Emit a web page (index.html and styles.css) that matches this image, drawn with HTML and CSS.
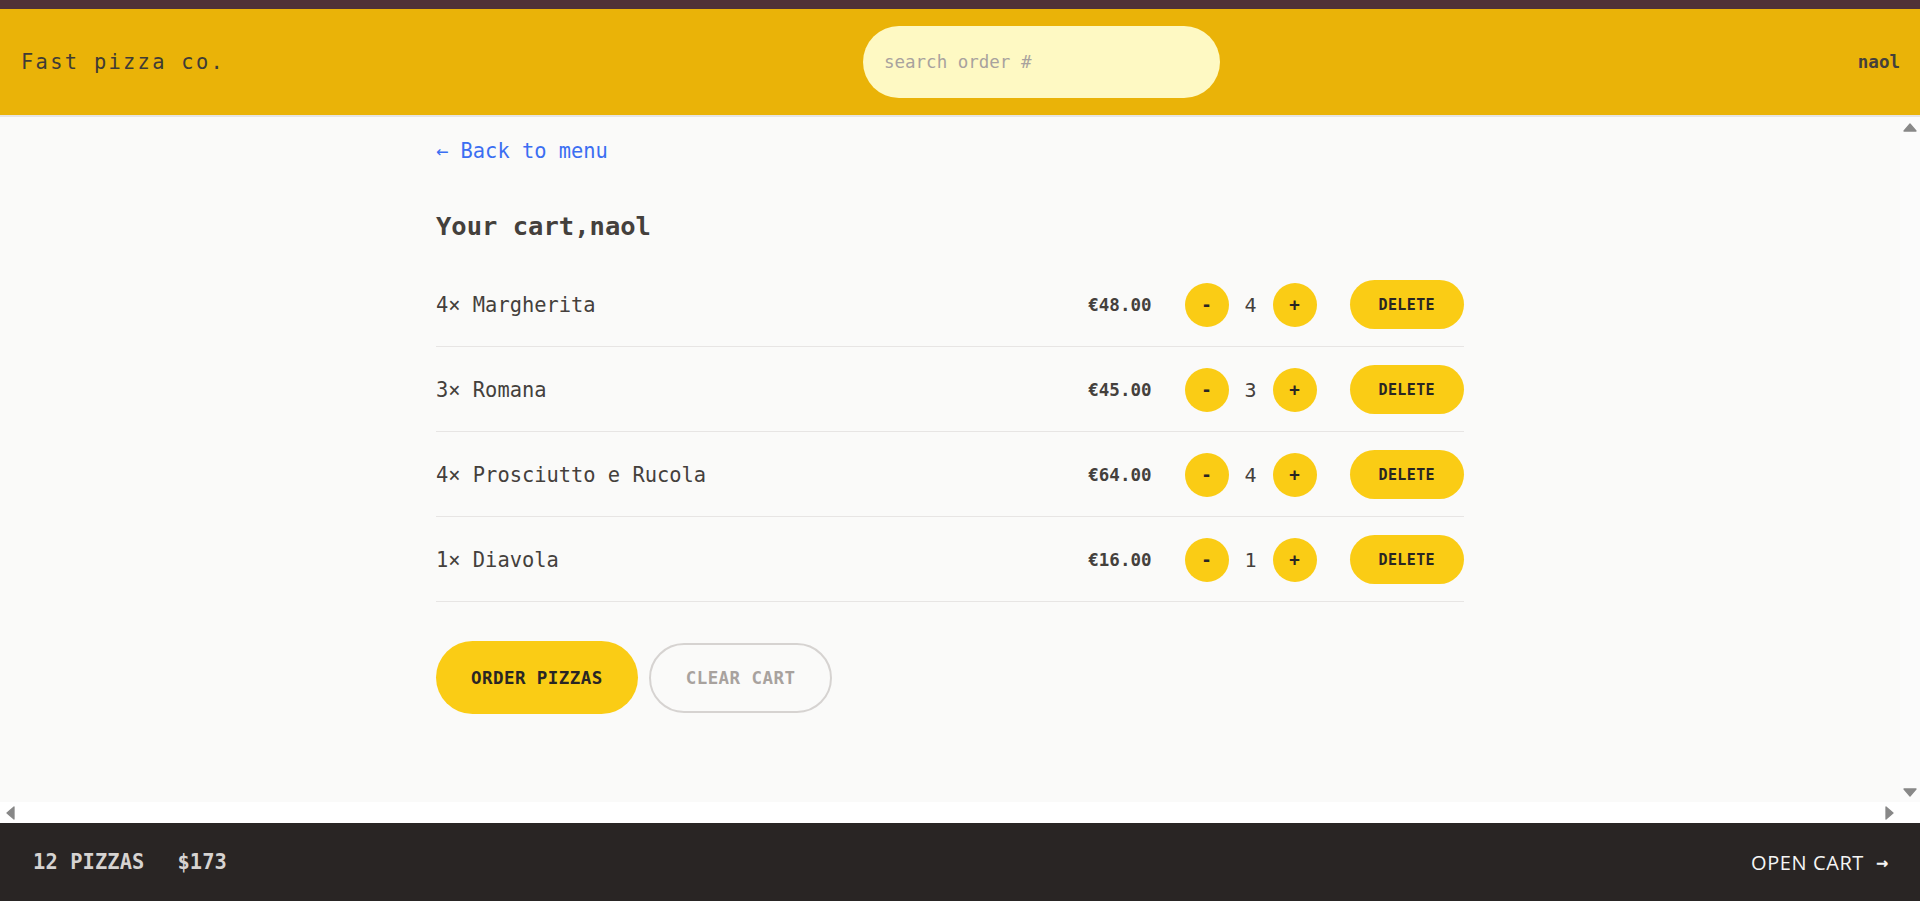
FILE: index.html
```html
<!DOCTYPE html>
<html lang="en">
<head>
<meta charset="utf-8">
<title>Fast pizza co.</title>
<link rel="stylesheet" href="styles.css">
</head>
<body>
<div class="topstrip"></div>
<header class="header">
  <a class="logo" href="#">Fast pizza co.</a>
  <form class="search">
    <input class="search-input" type="text" placeholder="search order #">
  </form>
  <div class="username">naol</div>
</header>
<main class="main">
  <div class="viewport">
    <div class="container">
      <a class="back-link" href="#">&larr; Back to menu</a>
      <h2 class="title">Your cart,naol</h2>
      <ul class="cart-list">
        <li class="cart-item">
          <p class="item-name">4&times; Margherita</p>
          <div class="item-controls">
            <p class="item-price">&euro;48.00</p>
            <div class="qty">
              <button class="btn-round">-</button>
              <span class="qty-num">4</span>
              <button class="btn-round">+</button>
            </div>
            <button class="btn-small">Delete</button>
          </div>
        </li>
        <li class="cart-item">
          <p class="item-name">3&times; Romana</p>
          <div class="item-controls">
            <p class="item-price">&euro;45.00</p>
            <div class="qty">
              <button class="btn-round">-</button>
              <span class="qty-num">3</span>
              <button class="btn-round">+</button>
            </div>
            <button class="btn-small">Delete</button>
          </div>
        </li>
        <li class="cart-item">
          <p class="item-name">4&times; Prosciutto e Rucola</p>
          <div class="item-controls">
            <p class="item-price">&euro;64.00</p>
            <div class="qty">
              <button class="btn-round">-</button>
              <span class="qty-num">4</span>
              <button class="btn-round">+</button>
            </div>
            <button class="btn-small">Delete</button>
          </div>
        </li>
        <li class="cart-item">
          <p class="item-name">1&times; Diavola</p>
          <div class="item-controls">
            <p class="item-price">&euro;16.00</p>
            <div class="qty">
              <button class="btn-round">-</button>
              <span class="qty-num">1</span>
              <button class="btn-round">+</button>
            </div>
            <button class="btn-small">Delete</button>
          </div>
        </li>
      </ul>
      <div class="actions">
        <a class="btn-primary" href="#">Order pizzas</a>
        <button class="btn-secondary">Clear cart</button>
      </div>
    </div>
  </div>
  <div class="vbar">
    <span class="sb-btn"><svg width="14" height="9" viewBox="0 0 14 9"><path d="M7 1 L13 8 L1 8 Z" fill="#888" stroke="#888" stroke-width="1.3" stroke-linejoin="round"/></svg></span>
    <span class="sb-btn"><svg width="14" height="9" viewBox="0 0 14 9"><path d="M1 1 L13 1 L7 8 Z" fill="#888" stroke="#888" stroke-width="1.3" stroke-linejoin="round"/></svg></span>
  </div>
  <div class="hbar">
    <span class="sb-btn sb-btn-h"><svg width="9" height="14" viewBox="0 0 9 14"><path d="M1 7 L8 1 L8 13 Z" fill="#888" stroke="#888" stroke-width="1.3" stroke-linejoin="round"/></svg></span>
    <span class="sb-btn sb-btn-h"><svg width="9" height="14" viewBox="0 0 9 14"><path d="M1 1 L8 7 L1 13 Z" fill="#888" stroke="#888" stroke-width="1.3" stroke-linejoin="round"/></svg></span>
  </div>
  <div class="corner"></div>
</main>
<footer class="footer">
  <p class="stats"><span>12 pizzas</span><span>$173</span></p>
  <a class="open-cart" href="#">Open cart<span class="arrow">&rarr;</span></a>
</footer>
</body>
</html>
```

FILE: styles.css
```css
* { box-sizing: border-box; }

html, body {
  margin: 0;
  padding: 0;
}

body {
  height: 100vh;
  display: grid;
  grid-template-rows: 9px 108px 1fr 78px;
  font-family: "DejaVu Sans Mono", "Liberation Mono", monospace;
  color: #44403c;
  background: #fafaf9;
  overflow: hidden;
}

.topstrip {
  background: #4f3237;
}

.header {
  display: flex;
  align-items: center;
  justify-content: space-between;
  padding: 0 20px 0 21px;
  background: #eab308;
  border-bottom: 2px solid #e7e5e4;
}

.logo {
  font-size: 20.4px;
  letter-spacing: 2.3px;
  color: #3f3b36;
  text-decoration: none;
}

.search { margin: 0; }

.search-input {
  display: block;
  width: 357px;
  height: 72px;
  border: none;
  border-radius: 999px;
  background: #fef9c3;
  padding: 0 21px;
  font-family: "DejaVu Sans Mono", monospace;
  font-size: 17.5px;
  color: #44403c;
  outline: none;
}

.search-input::placeholder { color: #a8a29e; }

.username {
  font-size: 17.5px;
  font-weight: 700;
  color: #44403c;
}

/* main area with its scrollbar chrome */
.main {
  display: grid;
  grid-template-columns: 1fr 20px;
  grid-template-rows: 1fr 21px;
  min-height: 0;
  background: #fafaf9;
}

.viewport {
  overflow: hidden;
  min-height: 0;
}

.vbar {
  display: flex;
  flex-direction: column;
  justify-content: space-between;
  background: #fbfbfb;
}

.hbar {
  display: flex;
  justify-content: space-between;
  background: #ffffff;
}

.corner {
  background: #ffffff;
}

.sb-btn {
  display: flex;
  align-items: center;
  justify-content: center;
  width: 20px;
  height: 20px;
}

.sb-btn-h {
  width: 21px;
  height: 21px;
}

.sb-btn svg { display: block; }

.container {
  width: 1028px;
  margin: 0 auto;
  padding-top: 19px;
}

.back-link {
  display: inline-block;
  font-size: 20.4px;
  line-height: 30px;
  color: #3b6ef2;
  text-decoration: none;
}

.title {
  margin: 43px 0 0;
  font-size: 25.5px;
  line-height: 35px;
  font-weight: 700;
  color: #44403c;
}

.cart-list {
  list-style: none;
  margin: 18px 0 0;
  padding: 0;
}

.cart-item {
  display: flex;
  align-items: center;
  justify-content: space-between;
  padding: 18px 0 17px;
  border-bottom: 1px solid #e7e5e4;
}

.item-name {
  margin: 0;
  font-size: 20.4px;
  line-height: 30px;
  color: #44403c;
}

.item-controls {
  display: flex;
  align-items: center;
  gap: 33px;
}

.item-price {
  margin: 0;
  font-size: 17.5px;
  font-weight: 700;
  color: #44403c;
}

.qty {
  display: flex;
  align-items: center;
  gap: 16px;
}

.qty-num {
  font-size: 20px;
  color: #44403c;
}

.btn-round {
  width: 44px;
  height: 44px;
  border: none;
  border-radius: 50%;
  background: #facc15;
  font-family: "DejaVu Sans Mono", monospace;
  font-size: 17.5px;
  font-weight: 700;
  color: #292524;
  padding: 0;
}

.btn-small {
  height: 49px;
  padding: 0 29px;
  border: none;
  border-radius: 999px;
  background: #facc15;
  font-family: "DejaVu Sans Mono", monospace;
  font-size: 15px;
  font-weight: 700;
  letter-spacing: 0.025em;
  text-transform: uppercase;
  color: #292524;
}

.actions {
  display: flex;
  align-items: center;
  gap: 11px;
  margin-top: 39px;
}

.btn-primary {
  display: flex;
  align-items: center;
  height: 73px;
  padding: 0 35px;
  border-radius: 999px;
  background: #facc15;
  font-size: 17.5px;
  font-weight: 700;
  letter-spacing: 0.025em;
  text-transform: uppercase;
  color: #292524;
  text-decoration: none;
}

.btn-secondary {
  height: 70px;
  padding: 0 35px;
  border: 2px solid #d6d3d1;
  border-radius: 999px;
  background: transparent;
  font-family: "DejaVu Sans Mono", monospace;
  font-size: 17.5px;
  font-weight: 700;
  letter-spacing: 0.025em;
  text-transform: uppercase;
  color: #a8a29e;
}

.footer {
  display: flex;
  align-items: center;
  justify-content: space-between;
  padding: 0 32px 0 33px;
  background: #292524;
}

.stats {
  display: flex;
  gap: 33px;
  margin: 0;
  font-size: 20.4px;
  font-weight: 700;
  letter-spacing: 0.1px;
  text-transform: uppercase;
  color: #d6d3d1;
}

.open-cart {
  display: flex;
  align-items: center;
  gap: 12px;
  font-family: "Open Sans", "Noto Sans", sans-serif;
  font-size: 20px;
  letter-spacing: 0.6px;
  text-transform: uppercase;
  color: #f5f5f4;
  text-decoration: none;
}

.arrow {
  font-family: "DejaVu Sans Mono", monospace;
  font-size: 20px;
  font-weight: 700;
  letter-spacing: 0;
}
```
